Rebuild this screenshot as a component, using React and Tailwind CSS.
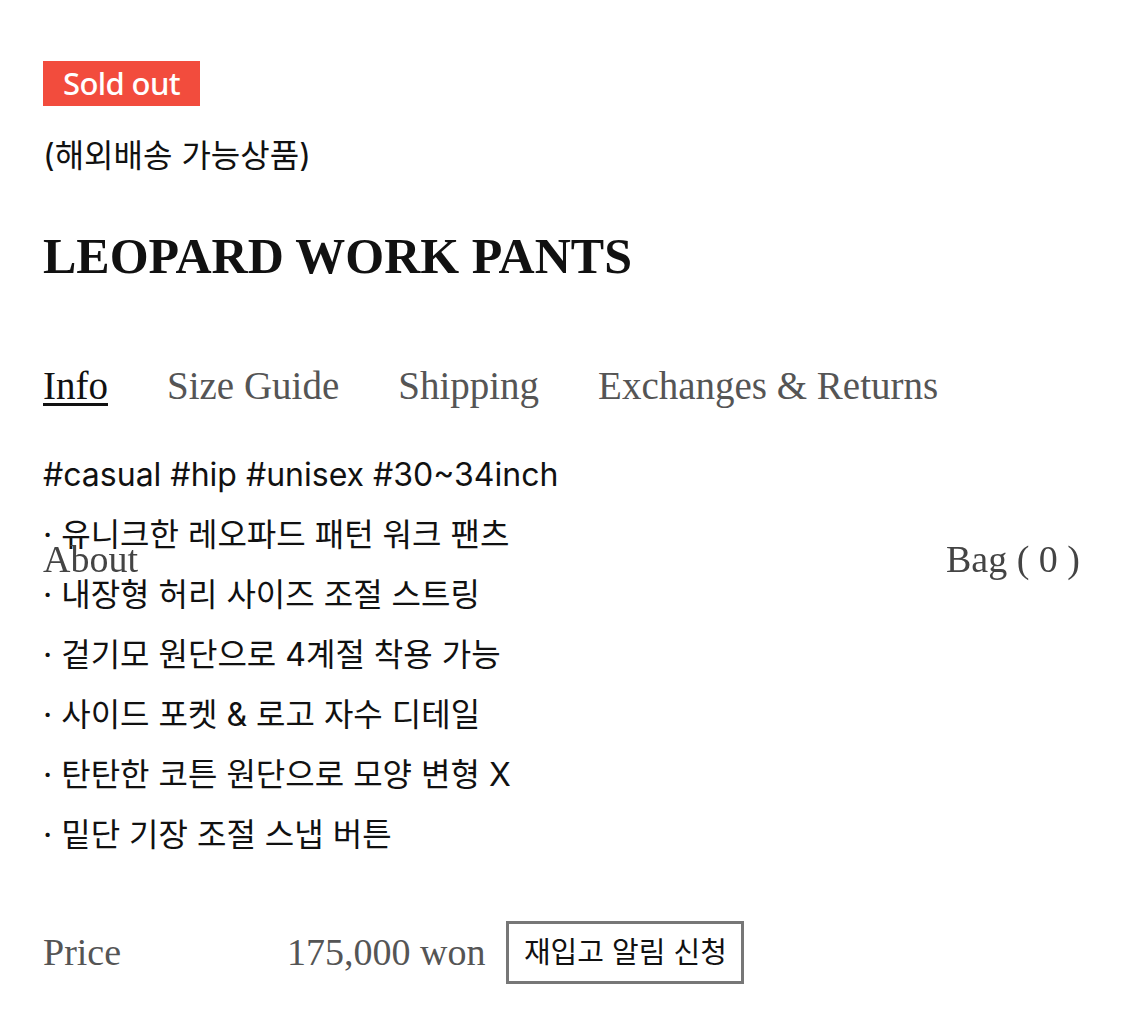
import React from 'react';

const serif = { fontFamily: '"Liberation Serif", "DejaVu Serif", serif' };

const tabs = ['Info', 'Size Guide', 'Shipping', 'Exchanges & Returns'];

const details = [
  '· 유니크한 레오파드 패턴 워크 팬츠',
  '· 내장형 허리 사이즈 조절 스트링',
  '· 겉기모 원단으로 4계절 착용 가능',
  '· 사이드 포켓 & 로고 자수 디테일',
  '· 탄탄한 코튼 원단으로 모양 변형 X',
  '· 밑단 기장 조절 스냅 버튼',
];

const App = () => {
  return (
    <div className="min-h-[1026px] bg-white font-['Inter','Noto_Sans_CJK_KR',sans-serif] text-[#111]">
      {/* fixed header sits over the content */}
      <div
        className="fixed left-0 right-0 top-[540px] flex justify-between pl-[43px] pr-[45px] text-[38px] leading-none text-[#444]"
        style={serif}
      >
        <span>About</span>
        <span>Bag ( 0 )</span>
      </div>

      <div className="px-[43px] pt-[61px]">
        <div className="inline-flex h-[45px] w-[157px] items-center justify-center bg-[#f24c3d] font-['Noto_Sans',sans-serif] text-[31px] font-medium tracking-[-0.6px] text-white">
          Sold out
        </div>
        <p className="mt-[32px] text-[32px] leading-[36px]">(해외배송 가능상품)</p>

        <h1 className="mt-[52px] text-[50px] font-bold leading-[60px] text-[#111]" style={serif}>
          LEOPARD WORK PANTS
        </h1>

        <div className="mt-[78px] flex gap-[59px] text-[39px] leading-[44px] text-[#555]" style={serif}>
          {tabs.map((t, i) => (
            <span
              key={t}
              className={i === 0 ? 'text-[#111] underline decoration-[3px] underline-offset-[4px]' : ''}
            >
              {t}
            </span>
          ))}
        </div>

        <div className="mt-[37px] text-[32px] leading-[60px]">
          <p>#casual #hip #unisex #30~34inch</p>
          {details.map((d) => (
            <p key={d}>{d}</p>
          ))}
        </div>

        <div className="mt-[56px] flex items-center text-[38px] text-[#555]" style={serif}>
          <span className="w-[244px]">Price</span>
          <span>175,000 won</span>
          <button className="ml-[21px] flex h-[63px] w-[238px] items-center justify-center border-[3px] border-[#777] font-['Inter','Noto_Sans_CJK_KR',sans-serif] text-[29px] text-[#111]">
            재입고 알림 신청
          </button>
        </div>
      </div>
    </div>
  );
};

export default App;
